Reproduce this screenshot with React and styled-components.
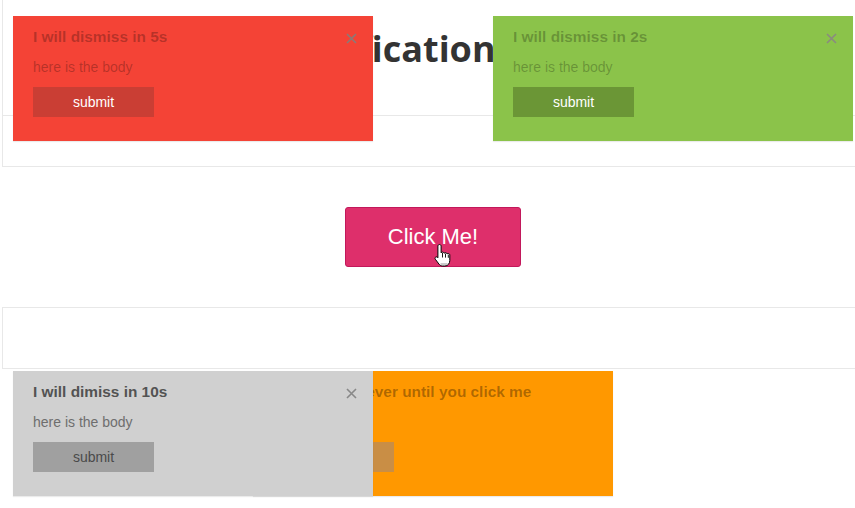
import React from 'react';
import styled, { createGlobalStyle } from 'styled-components';

const GlobalStyle = createGlobalStyle`
  html, body {
    margin: 0;
    padding: 0;
    background: #fff;
    overflow: hidden;
  }
  body {
    font-family: "Liberation Sans", Arial, sans-serif;
  }
  * {
    box-sizing: border-box;
  }
`;

const themes = {
  error: { bg: '#f44336', text: 'rgba(0, 0, 0, 0.26)', button: '#ca3e34', buttonText: '#fff', close: '#8a7a78' },
  success: { bg: '#8bc34a', text: 'rgba(0, 0, 0, 0.25)', button: '#6b9636', buttonText: '#fff', close: '#8a8a80' },
  info: { bg: '#d0d0d0', text: '#535353', body: '#6e6e6e', button: '#a0a0a0', buttonText: '#4a4a4a', close: '#888' },
  warning: { bg: '#ff9800', text: 'rgba(0, 0, 0, 0.32)', button: '#c98e45', buttonText: '#fff', close: '#888' },
};

const Page = styled.div`
  position: relative;
  width: 866px;
  min-height: 100vh;
  padding: 0 2px;
`;

const Card = styled.div`
  border: 1px solid #e8e8e8;
  border-top: ${props => (props.$cut ? 'none' : '1px solid #e8e8e8')};
  border-right: none;
  min-height: ${props => props.$minHeight || 0}px;
`;

const Title = styled.h1`
  margin: 0;
  padding: 27px 12px 0 0;
  font-family: "Open Sans", sans-serif;
  font-size: 36px;
  line-height: 43px;
  font-weight: 700;
  color: #333;
  text-align: center;
`;

const Divider = styled.div`
  height: 1px;
  margin-top: 45px;
  margin-bottom: 50px;
  background: #e8e8e8;
`;

const ButtonRow = styled.div`
  display: flex;
  justify-content: center;
  padding: 40px 0;
`;

const ClickButton = styled.button`
  position: relative;
  width: 176px;
  height: 60px;
  border: 1px solid #c2185b;
  border-radius: 3px;
  background: #de2f6b;
  color: #fff;
  font-family: "Liberation Sans", Arial, sans-serif;
  font-size: 22px;
  cursor: pointer;
`;

const Cursor = styled.svg`
  position: absolute;
  left: 88px;
  top: 36px;
`;

const Notification = styled.div`
  position: absolute;
  width: 360px;
  padding: 11px 16px 24px 20px;
  background: ${props => themes[props.$kind].bg};
  box-shadow: 0 1px 1px rgba(0, 0, 0, 0.08);
  z-index: ${props => props.$layer || 1};
  ${props => props.$top !== undefined && `top: ${props.$top}px;`}
  ${props => props.$bottom !== undefined && `bottom: ${props.$bottom}px;`}
  ${props => props.$left !== undefined && `left: ${props.$left}px;`}
  ${props => props.$right !== undefined && `right: ${props.$right}px;`}
  ${props => props.$center && 'left: 50%; transform: translateX(-50%);'}
`;

const NoteHeader = styled.div`
  display: flex;
  align-items: center;
  justify-content: space-between;
  height: 20px;
`;

const NoteTitle = styled.div`
  font-size: 15.4px;
  font-weight: 700;
  line-height: 20px;
  color: ${props => themes[props.$kind].text};
  white-space: nowrap;
`;

const Close = styled.svg`
  flex-shrink: 0;
  margin-top: 2px;
`;

const NoteBody = styled.div`
  margin: 10px 0;
  font-size: 14px;
  line-height: 20px;
  color: ${props => themes[props.$kind].body || themes[props.$kind].text};
`;

const SubmitButton = styled.button`
  display: block;
  width: 121px;
  height: 30px;
  padding: 0;
  border: none;
  background: ${props => themes[props.$kind].button};
  color: ${props => themes[props.$kind].buttonText};
  font-family: "Liberation Sans", Arial, sans-serif;
  font-size: 14px;
  line-height: 30px;
`;

const CloseIcon = ({ kind }) => (
  <Close width="11" height="11" viewBox="0 0 11 11">
    <path d="M1 1L10 10M10 1L1 10" stroke={themes[kind].close} strokeWidth="1.6" />
  </Close>
);

const Note = ({ kind, title, closable = true, ...pos }) => (
  <Notification $kind={kind} {...pos}>
    <NoteHeader>
      <NoteTitle $kind={kind}>{title}</NoteTitle>
      {closable && <CloseIcon kind={kind} />}
    </NoteHeader>
    <NoteBody $kind={kind}>here is the body</NoteBody>
    <SubmitButton $kind={kind}>submit</SubmitButton>
  </Notification>
);

const HandCursor = () => (
  <Cursor width="18" height="24" viewBox="0 0 18 24">
    <path
      d="M5.5 0.5c.9 0 1.6.7 1.6 1.6v6.8c.3-.5.8-.8 1.4-.8.8 0 1.4.5 1.6 1.2.3-.4.8-.7 1.4-.7.8 0 1.5.6 1.6 1.3.3-.3.7-.4 1.1-.4.9 0 1.6.7 1.6 1.6v5.4c0 3-2 5.5-5 5.5H8.6c-1.5 0-2.9-.8-3.7-2L1.3 15.2c-.5-.7-.3-1.700.4-2.1.7-.4 1.5-.2 2 .4l.2.3V2.1c0-.9.7-1.6 1.6-1.6z"
      fill="#fff"
      stroke="#000"
      strokeWidth="1"
    />
    <path d="M8.5 9v4.5M11.5 9.6v4M14.3 10.6v3.2" stroke="#000" strokeWidth="0.9" />
    <path d="M6.5 20h7" stroke="#bbb" strokeWidth="1.5" />
  </Cursor>
);

const App = () => {
  return (
    <>
      <GlobalStyle />
      <Page>
        <Card $cut>
          <Title>Notification App</Title>
          <Divider />
        </Card>

        <ButtonRow>
          <ClickButton>
            Click Me!
            <HandCursor />
          </ClickButton>
        </ButtonRow>

        <Card $minHeight={62} />

        <Note kind="error" title="I will dismiss in 5s" $top={16} $left={13} $layer={2} />
        <Note kind="success" title="I will dismiss in 2s" $top={16} $right={13} $layer={2} />
        <Note kind="warning" title="I will stay forever until you click me" closable={false} $bottom={12} $center $layer={2} />
        <Note kind="info" title="I will dimiss in 10s" $bottom={12} $left={13} $layer={3} />
      </Page>
    </>
  );
};

export default App;
